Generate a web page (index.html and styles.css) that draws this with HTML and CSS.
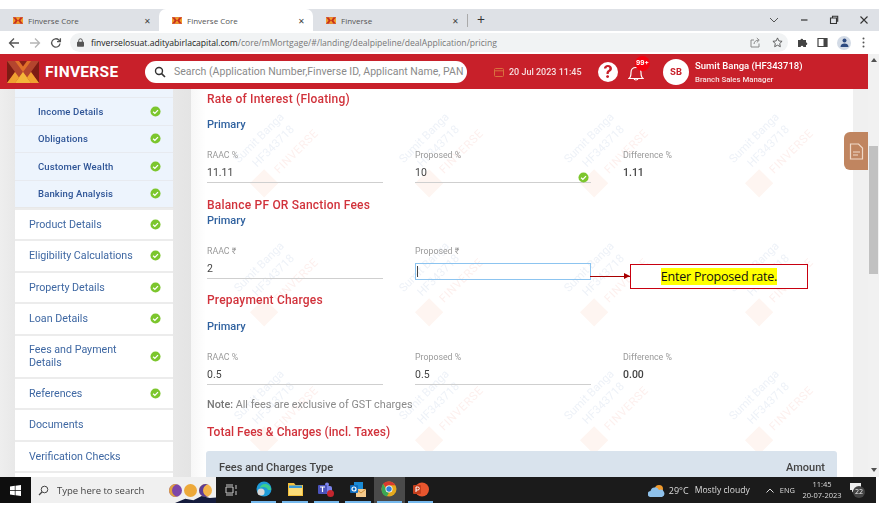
FILE: index.html
```html
<!DOCTYPE html>
<html lang="en">
<head>
<meta charset="utf-8">
<title>Finverse Core</title>
<link rel="stylesheet" href="styles.css">
</head>
<body>
<svg class="defs" width="0" height="0" aria-hidden="true">
  <symbol id="fav" viewBox="0 0 12 8"><rect width="12" height="8" fill="#c8321e"/><path d="M0 0l3 4-3 4zM12 0L9 4l3 4zM3 0l3 4 3-4zM3 8l3-4 3 4z" fill="#f2a02c"/></symbol>
  <symbol id="ok" viewBox="0 0 12 12"><circle cx="6" cy="6" r="5.5" fill="#7cc62d"/><path d="M3.4 6.2l1.9 1.9 3.4-3.6" fill="none" stroke="#fff" stroke-width="1.4"/></symbol>
</svg>
<div class="screen">
  <div class="tabstrip">
    <div class="tab"><svg class="fav"><use href="#fav"/></svg><span class="tab-title">Finverse Core</span><span class="tab-x">✕</span></div>
    <div class="tab tab-active"><svg class="fav"><use href="#fav"/></svg><span class="tab-title">Finverse Core</span><span class="tab-x">✕</span></div>
    <div class="tab tab-last"><svg class="fav"><use href="#fav"/></svg><span class="tab-title">Finverse</span><span class="tab-x">✕</span></div>
    <span class="tab-plus">+</span>
    <div class="winctl">
      <svg width="10" height="6" viewBox="0 0 10 6"><path d="M1 1l4 4 4-4" fill="none" stroke="#555" stroke-width="1"/></svg>
      <svg width="10" height="10" viewBox="0 0 10 10"><path d="M2 5h6.5" stroke="#333" stroke-width="1.2"/></svg>
      <svg width="10" height="10" viewBox="0 0 10 10"><path d="M1.5 3h6v5.5h-6zM3.5 3V1.3h5.2v5H7.5" fill="none" stroke="#333" stroke-width="1.1"/></svg>
      <svg width="10" height="10" viewBox="0 0 10 10"><path d="M1.5 1.5l7 7M8.5 1.5l-7 7" stroke="#333" stroke-width="1.1"/></svg>
    </div>
  </div>
  <div class="toolbar">
    <svg class="nav" width="12" height="12" viewBox="0 0 12 12"><path d="M11 6H2M6 1.5L1.5 6 6 10.5" fill="none" stroke="#555" stroke-width="1.3"/></svg>
    <svg class="nav" width="12" height="12" viewBox="0 0 12 12"><path d="M1 6h9M6 1.5L10.5 6 6 10.5" fill="none" stroke="#b5b5b5" stroke-width="1.3"/></svg>
    <svg class="nav" width="12" height="12" viewBox="0 0 12 12"><path d="M10 6.5A4.2 4.2 0 1 1 8.8 3L10.3 4.5M10.4 1.2v3.4H7" fill="none" stroke="#555" stroke-width="1.3"/></svg>
    <div class="omnibox">
      <svg class="lock" width="7" height="9" viewBox="0 0 7 9"><path d="M1.7 4V2.6a1.8 1.8 0 0 1 3.6 0V4" fill="none" stroke="#555"/><rect y="3.8" width="7" height="5" rx=".8" fill="#555"/></svg>
      <span class="url"><b>finverselosuat.adityabirlacapital.com</b>/core/mMortgage/#/landing/dealpipeline/dealApplication/pricing</span>
      <svg class="omni-share" width="11" height="11" viewBox="0 0 11 11"><path d="M9 6.5V10H1V3h3M4 7c.3-2.600 2-3.800 4.500-3.800M6.800 1l2.400 2.200-2.400 2.300" fill="none" stroke="#888"/></svg>
      <svg width="11" height="11" viewBox="0 0 12 12"><path d="M6 1l1.500 3.300 3.500.4-2.600 2.400.7 3.500L6 8.900l-3.100 1.700.7-3.500L1 4.700l3.500-.4z" fill="none" stroke="#555"/></svg>
    </div>
    <div class="tool-icons">
      <svg width="11" height="11" viewBox="0 0 11 11"><path d="M1 3h2.500a1.300 1.300 0 0 1 2.600 0H9v2.500a1.300 1.300 0 0 1 0 2.600V10H6.300a1.300 1.300 0 0 0-2.600 0H1z" fill="#444"/></svg>
      <svg width="11" height="11" viewBox="0 0 11 11"><path d="M1 1.500h9v8H1z" fill="none" stroke="#444" stroke-width="1.200"/><path d="M6.500 1.500H10v8H6.500z" fill="#444"/></svg>
      <span class="profile"><svg width="9" height="9" viewBox="0 0 9 9"><circle cx="4.500" cy="2.500" r="2" fill="#2d4a80"/><path d="M.5 9c0-2.500 1.800-3.500 4-3.500s4 1 4 3.500z" fill="#2d4a80"/></svg></span>
      <svg width="3" height="11" viewBox="0 0 3 11"><circle cx="1.500" cy="1.500" r="1" fill="#555"/><circle cx="1.500" cy="5.500" r="1" fill="#555"/><circle cx="1.500" cy="9.500" r="1" fill="#555"/></svg>
    </div>
  </div>
  <div class="viewport">
    <div class="page">
      <header class="appbar">
        <svg class="logo" viewBox="0 0 32 22"><rect width="32" height="22" fill="#b4452e"/><path d="M0 0l8 11L0 22zM32 0l-8 11 8 11z" fill="#7d1c14"/><path d="M8 0l8 11 8-11zM16 11l-8 11h16z" fill="#e0702a"/><path d="M8 22l8-11 8 11z" fill="#f4b63a"/><path d="M0 22l8-11 4 5.500L8 22zM32 22l-8-11-4 5.500 4 5.500z" fill="#f0a030"/><path d="M12 0l4 5.500L20 0z" fill="#8a2016"/></svg>
        <span class="brand">FINVERSE</span>
        <div class="search">
          <svg class="search-icon" width="12" height="12" viewBox="0 0 12 12"><circle cx="5" cy="5" r="3.500" fill="none" stroke="#333" stroke-width="1.400"/><path d="M7.600 7.600L11 11" stroke="#333" stroke-width="1.600"/></svg>
          <span class="search-text">Search (Application Number,Finverse ID, Applicant Name, PAN</span>
        </div>
        <svg class="cal" width="10" height="10" viewBox="0 0 10 10"><rect x=".5" y="1.500" width="9" height="8" rx="1" fill="none" stroke="#d9713f"/><path d="M.5 3.800h9" stroke="#d9713f"/></svg>
        <span class="date">20 Jul 2023 11:45</span>
        <span class="help">?</span>
        <span class="bell">
          <svg width="16" height="16" viewBox="0 0 16 16"><path d="M1 13.500c2-1.500 2-3 2-6 0-3 2-5 5-5s5 2 5 5c0 3 0 4.500 2 6zM6 13.500c.3 2 3.700 2 4 0" fill="none" stroke="#fff" stroke-width="1.200"/></svg>
          <span class="badge">99+</span>
        </span>
        <span class="avatar">SB</span>
        <div class="user">
          <span class="user-name">Sumit Banga (HF343718)</span>
          <span class="user-role">Branch Sales Manager</span>
        </div>
      </header>
      <div class="workspace">
        <nav class="sidebar">
          <ul class="sub-list">
            <li class="sub-row"><span>Income Details</span><svg class="ok"><use href="#ok"/></svg></li>
            <li class="sub-row"><span>Obligations</span><svg class="ok"><use href="#ok"/></svg></li>
            <li class="sub-row"><span>Customer Wealth</span><svg class="ok"><use href="#ok"/></svg></li>
            <li class="sub-row"><span>Banking Analysis</span><svg class="ok"><use href="#ok"/></svg></li>
          </ul>
          <ul class="main-list">
            <li class="main-row"><span>Product Details</span><svg class="ok"><use href="#ok"/></svg></li>
            <li class="main-row"><span>Eligibility Calculations</span><svg class="ok"><use href="#ok"/></svg></li>
            <li class="main-row"><span>Property Details</span><svg class="ok"><use href="#ok"/></svg></li>
            <li class="main-row"><span>Loan Details</span><svg class="ok"><use href="#ok"/></svg></li>
            <li class="main-row main-row-tall"><span>Fees and Payment<br>Details</span><svg class="ok"><use href="#ok"/></svg></li>
            <li class="main-row"><span>References</span><svg class="ok"><use href="#ok"/></svg></li>
            <li class="main-row"><span>Documents</span></li>
            <li class="main-row"><span>Verification Checks</span></li>
            <li class="main-row"><span></span></li>
          </ul>
        </nav>
        <main class="content">
          <div class="watermarks" aria-hidden="true">
            <div class="wm"><i class="wm-blue">Sumit Banga</i><i class="wm-blue">HF343718</i><i class="wm-red"><em></em>FINVERSE</i></div>
            <div class="wm"><i class="wm-blue">Sumit Banga</i><i class="wm-blue">HF343718</i><i class="wm-red"><em></em>FINVERSE</i></div>
            <div class="wm"><i class="wm-blue">Sumit Banga</i><i class="wm-blue">HF343718</i><i class="wm-red"><em></em>FINVERSE</i></div>
            <div class="wm"><i class="wm-blue">Sumit Banga</i><i class="wm-blue">HF343718</i><i class="wm-red"><em></em>FINVERSE</i></div>
            <div class="wm"><i class="wm-blue">Sumit Banga</i><i class="wm-blue">HF343718</i><i class="wm-red"><em></em>FINVERSE</i></div>
            <div class="wm"><i class="wm-blue">Sumit Banga</i><i class="wm-blue">HF343718</i><i class="wm-red"><em></em>FINVERSE</i></div>
            <div class="wm"><i class="wm-blue">Sumit Banga</i><i class="wm-blue">HF343718</i><i class="wm-red"><em></em>FINVERSE</i></div>
            <div class="wm"><i class="wm-blue">Sumit Banga</i><i class="wm-blue">HF343718</i><i class="wm-red"><em></em>FINVERSE</i></div>
            <div class="wm"><i class="wm-blue">Sumit Banga</i><i class="wm-blue">HF343718</i><i class="wm-red"><em></em>FINVERSE</i></div>
            <div class="wm"><i class="wm-blue">Sumit Banga</i><i class="wm-blue">HF343718</i><i class="wm-red"><em></em>FINVERSE</i></div>
            <div class="wm"><i class="wm-blue">Sumit Banga</i><i class="wm-blue">HF343718</i><i class="wm-red"><em></em>FINVERSE</i></div>
            <div class="wm"><i class="wm-blue">Sumit Banga</i><i class="wm-blue">HF343718</i><i class="wm-red"><em></em>FINVERSE</i></div>
          </div>
          <div class="form">
            <h2 class="h-roi">Rate of Interest (Floating)</h2>
            <h3 class="primary p-roi">Primary</h3>
            <div class="fields">
              <div class="field"><label>RAAC %</label><div class="value">11.11</div></div>
              <div class="field"><label>Proposed %</label><div class="value">10<svg class="ok ok-field"><use href="#ok"/></svg></div></div>
              <div class="field field-plain"><label>Difference %</label><div class="value">1.11</div></div>
            </div>
            <h2 class="h-pf">Balance PF OR Sanction Fees</h2>
            <h3 class="primary p-pf">Primary</h3>
            <div class="fields">
              <div class="field"><label>RAAC ₹</label><div class="value">2</div></div>
              <div class="field"><label>Proposed ₹</label><div class="value value-focus"><span class="caret"></span></div></div>
            </div>
            <h2 class="h-pre">Prepayment Charges</h2>
            <h3 class="primary p-pre">Primary</h3>
            <div class="fields">
              <div class="field"><label>RAAC %</label><div class="value">0.5</div></div>
              <div class="field"><label>Proposed %</label><div class="value">0.5</div></div>
              <div class="field field-plain"><label>Difference %</label><div class="value">0.00</div></div>
            </div>
            <p class="note"><b>Note:</b> All fees are exclusive of GST charges</p>
            <h2 class="h-total">Total Fees &amp; Charges (incl. Taxes)</h2>
            <div class="table-head"><span>Fees and Charges Type</span><span>Amount</span></div>
          </div>
          <div class="callout-arrow"></div>
          <div class="callout"><mark>Enter Proposed rate.</mark></div>
        </main>
        <div class="rail">
          <span class="doc-tab"><svg width="15" height="17" viewBox="0 0 15 17"><path d="M1.500 1h8l4 4v11h-12z" fill="none" stroke="#f0d9c8" stroke-width="1.200"/><path d="M4 9h7M4 12h5" stroke="#f0d9c8"/></svg></span>
        </div>
      </div>
    </div>
    <div class="scrollbar">
      <span class="arrow-up"></span>
      <span class="thumb"></span>
      <span class="arrow-down"></span>
    </div>
  </div>
  <footer class="taskbar">
    <span class="start"><svg width="11" height="11" viewBox="0 0 11 11"><path d="M0 1.500l4.800-.7v4.400H0zM5.500.7L11 0v5.200H5.500zM0 5.900h4.800v4.300L0 9.500zM5.500 5.900H11V11l-5.500-.8z" fill="#fff"/></svg></span>
    <div class="tb-search">
      <svg class="tb-glass" width="11" height="11" viewBox="0 0 11 11"><circle cx="6.500" cy="4.500" r="3.300" fill="none" stroke="#444"/><path d="M4 7L1 10" stroke="#444" stroke-width="1.200"/></svg>
      <span>Type here to search</span>
      <div class="moons"><i class="moon-a"></i><i class="moon-b"></i><i class="moon-c"></i></div>
    </div>
    <svg class="taskview" width="13" height="12" viewBox="0 0 13 12"><path d="M1 3h7v6H1zM11 1v4M11 7v4M1 1h7M1 11h7" fill="none" stroke="#ccc"/></svg>
    <div class="apps">
      <span class="app"><svg width="16" height="16" viewBox="0 0 16 16"><circle cx="8" cy="8" r="7.500" fill="#1e9bd7"/><path d="M15 9c0-4-3-6-6-6-3 0-5 2-5 4 3-2 7-1 8 2z" fill="#3ccf8e"/><circle cx="5" cy="11" r="3.600" fill="#d8d8d8"/></svg></span>
      <span class="app"><svg width="15" height="13" viewBox="0 0 15 13"><path d="M0 0h6l1.500 2H15v11H0z" fill="#f5c13d"/><rect x="1" y="4" width="13" height="8" fill="#fbdc78"/><rect x="1" y="2.500" width="13" height="2.500" fill="#3b9bd9"/></svg></span>
      <span class="app"><svg width="16" height="15" viewBox="0 0 16 15"><circle cx="9" cy="2.500" r="2" fill="#7b83eb"/><rect x="5" y="4" width="9" height="8" rx="2" fill="#7b83eb"/><rect y="3" width="9" height="9" rx="1" fill="#4b53bc"/><path d="M2 5h5M4.500 5v5" stroke="#fff" stroke-width="1.200"/><circle cx="12.500" cy="11.500" r="3.500" fill="#c4262e"/></svg></span>
      <span class="app"><svg width="16" height="15" viewBox="0 0 16 15"><rect x="4" width="9" height="8" fill="#1a8ad4"/><rect x="6" y="7" width="10" height="8" fill="#f5c98a"/><path d="M6 7l5 4 5-4" fill="none" stroke="#c88a3a"/><rect y="3" width="8" height="8" rx="1" fill="#0f6cbd"/><circle cx="4" cy="7" r="2" fill="none" stroke="#fff" stroke-width="1.200"/></svg></span>
      <span class="app app-active"><svg width="16" height="16" viewBox="0 0 16 16"><circle cx="8" cy="8" r="7.500" fill="#e5a91e"/><path d="M8 .5a7.500 7.500 0 0 1 6.500 3.800H8a3.700 3.700 0 0 0-3.300 2L2 2.800A7.500 7.500 0 0 1 8 .5z" fill="#d93a2f"/><path d="M.7 8A7.500 7.500 0 0 1 2 2.800l3 5.200a3 3 0 0 0 3 3.700l-2.300 3.900A7.500 7.500 0 0 1 .7 8z" fill="#3aa655"/><circle cx="8" cy="8" r="3.500" fill="#fff"/><circle cx="8" cy="8" r="2.700" fill="#2f7fd9"/></svg></span>
      <span class="app"><svg width="16" height="15" viewBox="0 0 16 15"><circle cx="9" cy="7.500" r="7" fill="#e8562e"/><rect y="3" width="8" height="9" rx="1" fill="#c43e1c"/><path d="M3 10V5h1.800a1.400 1.400 0 0 1 0 3H3" fill="none" stroke="#fff"/></svg></span>
    </div>
    <div class="tray">
      <svg class="weather" width="17" height="13" viewBox="0 0 17 13"><circle cx="11" cy="5" r="4" fill="#f09a2c"/><path d="M3 13a3 3 0 0 1-.5-6 4.500 4.500 0 0 1 8.500-1 3.500 3.500 0 0 1 3 7z" fill="#8fc1ea"/></svg>
      <span class="temp">29°C</span>
      <span class="cond">Mostly cloudy</span>
      <svg class="chev" width="8" height="5" viewBox="0 0 8 5"><path d="M.5 4.500L4 1l3.500 3.500" fill="none" stroke="#ddd"/></svg>
      <span class="lang">ENG</span>
      <div class="clock"><span>11:45</span><span>20-07-2023</span></div>
      <span class="notif"><svg width="11" height="10" viewBox="0 0 11 10"><path d="M0 0h11v7H4L2 9.500V7H0z" fill="#eee"/></svg><b>22</b></span>
    </div>
  </footer>
</div>
</body>
</html>
```
FILE: styles.css
```css
* { box-sizing: border-box; margin: 0; padding: 0; }
html, body { width: 879px; height: 525px; overflow: hidden; background: #fff; }
body { font-family: "Inter", "Liberation Sans", sans-serif; }
.defs { position: absolute; }
ul { list-style: none; }
i, em { font-style: normal; }

.screen { width: 879px; height: 525px; padding: 9px 0 22px; display: flex; flex-direction: column; filter: blur(.35px); }

/* browser chrome */
.tabstrip { height: 22px; flex: none; background: #dee1e6; display: flex; align-items: center; font-family: "Open Sans", sans-serif; }
.tab { width: 154px; height: 22px; padding: 0 6px 0 13px; display: flex; align-items: center; font-size: 8px; color: #555; flex: none; }
.tab:first-child { width: 159px; }
.tab-active { background: #fff; border-radius: 7px 7px 0 0; }
.fav { width: 10px; height: 7px; margin-right: 5px; flex: none; }
.tab-title { flex: 1; }
.tab-x { font-size: 8px; color: #444; margin-right: 2px; }
.tab-plus { padding-left: 9px; border-left: 1px solid #aaa; height: 13px; line-height: 12px; font-size: 14px; color: #333; }
.winctl { margin-left: auto; display: flex; align-items: center; gap: 20px; padding-right: 10px; }
.toolbar { height: 23px; flex: none; background: #fff; display: flex; align-items: center; padding-left: 8px; }
.nav { margin-right: 9px; flex: none; }
.omnibox { width: 718px; height: 19px; margin-left: -1px; margin-right: 9px; padding: 0 5px 0 7px; border-radius: 10px; background: #f1f3f4; display: flex; align-items: center; gap: 11px; }
.lock { flex: none; }
.omnibox .url { margin-left: -4px; font-family: "Open Sans", sans-serif; font-size: 8.6px; color: #777; white-space: nowrap; flex: 1; }
.url b { font-weight: 400; color: #222; }
.tool-icons { display: flex; align-items: center; gap: 9px; }
.profile { width: 14px; height: 14px; border-radius: 50%; background: #d3dbe6; display: flex; align-items: center; justify-content: center; margin-right: 2px; }

/* viewport */
.viewport { flex: 1; min-height: 0; display: flex; }
.page { width: 868px; flex: none; display: flex; flex-direction: column; min-height: 0; }
.scrollbar { flex: 1; background: #f1f1f1; display: flex; flex-direction: column; align-items: center; }
.arrow-up { margin-top: 4px; border: 3px solid transparent; border-bottom: 4px solid #505050; border-top: 0; }
.thumb { margin-top: 84px; width: 9px; height: 128px; background: #c1c1c1; }
.arrow-down { margin-top: auto; margin-bottom: 5px; border: 3px solid transparent; border-top: 4px solid #505050; border-bottom: 0; }

/* app header */
.appbar { height: 35px; flex: none; background: #c8202a; display: flex; align-items: center; color: #fff; padding-left: 7px; }
.logo { width: 32px; height: 22px; flex: none; }
.brand { margin-left: 6px; width: 100px; font-size: 15.5px; font-weight: 700; flex: none; font-family: "Roboto", sans-serif; letter-spacing: .3px; }
.search { width: 322px; height: 22px; background: #fff; border-radius: 11px; display: flex; align-items: center; padding-left: 9px; overflow: hidden; flex: none; }
.search-icon { flex: none; }
.search-text { margin-left: 8px; font-family: "Roboto", sans-serif; font-size: 10.5px; color: #8a8a8a; white-space: nowrap; letter-spacing: .02px; }
.cal { margin-left: 27px; flex: none; }
.date { margin-left: 5px; width: 73px; font-size: 9px; font-weight: 500; color: #f6dfdf; white-space: nowrap; flex: none; font-family: "Roboto", sans-serif; }
.help { margin-left: 16px; width: 20px; height: 20px; border-radius: 50%; background: #fff; color: #c8202a; font-size: 17px; font-weight: 700; line-height: 20px; text-align: center; flex: none; }
.bell { margin-left: 10px; position: relative; width: 16px; height: 16px; flex: none; top: 1px; }
.bell svg { display: block; }
.badge { position: absolute; left: 7px; top: -9px; width: 15px; height: 15px; border-radius: 50%; background: #f5000f; font-size: 6.5px; font-weight: 700; line-height: 15px; text-align: center; }
.avatar { margin-left: 19px; width: 26px; height: 26px; border-radius: 50%; background: #fff; color: #c8202a; font-size: 9px; font-weight: 700; line-height: 26px; text-align: center; flex: none; }
.user { margin-left: 6px; display: flex; flex-direction: column; gap: 4px; font-family: "Roboto", sans-serif; white-space: nowrap; }
.user-name { font-size: 9.5px; font-weight: 500; }
.user-role { font-size: 7.8px; font-weight: 500; color: #f6dfdf; }

/* workspace */
.workspace { flex: 1; min-height: 0; display: flex; overflow: hidden; }
.sidebar { width: 191px; flex: none; padding: 0 18px 0 15px; background: linear-gradient(90deg, #eee 0, #e8e8e8 8%, #e8e8e8 90%, #e4e4e4 100%); overflow: hidden; font-family: "Roboto", sans-serif; }
.sub-list { background: #edf4fd; padding-top: 8px; }
.sub-row { height: 27.5px; display: flex; align-items: center; justify-content: space-between; padding: 0 12px 0 23px; font-size: 9.5px; font-weight: 500; letter-spacing: .15px; color: #2f5597; border-top: 1px solid #e7eaf0; }
.main-list { background: #ededed; margin-top: .5px; }
.main-row { height: 31.5px; background: #fff; border-top: 2px solid #ececec; display: flex; align-items: center; justify-content: space-between; padding: 0 12px 0 14px; font-size: 10.7px; line-height: 13px; color: #3f68a3; }
.main-row-tall { height: 43px; }
.ok { width: 11px; height: 11px; flex: none; }

.content { flex: 1; min-width: 0; position: relative; background: linear-gradient(90deg, #f7f7f7 0, #fff 15px); }
.watermarks { position: absolute; left: 6px; top: -9px; display: grid; grid-template-columns: repeat(4, 165px); grid-auto-rows: 128.5px; pointer-events: none; }
.wm { width: 165px; height: 128.5px; display: flex; flex-direction: column; align-items: flex-start; justify-content: center; padding-left: 40px; transform: rotate(-45deg); font-family: "Roboto", sans-serif; font-size: 11.5px; line-height: 16px; white-space: nowrap; }
.wm i { display: block; }
.wm-blue { color: #eef2f8; }
.wm-blue + .wm-blue { margin-left: 10px; }
.wm-red { color: #fdf0ee; margin-left: -6px; display: flex !important; align-items: center; gap: 7px; margin-top: 2px; letter-spacing: .6px; }
.wm-red em { width: 20px; height: 20px; background: #fef5f1; flex: none; }

.form { position: relative; padding: 0 16px; font-family: "Roboto", sans-serif; }
h2 { font-size: 12px; font-weight: 500; line-height: 14px; color: #d1323b; letter-spacing: .2px; }
.primary { font-size: 11px; font-weight: 500; line-height: 12px; color: #2f619f; }
.h-roi { margin-top: 3px; }
.p-roi { margin-top: 13px; }
.p-pf { margin-top: 3px; }
.p-pre { margin-top: 14px; }
.h-pf { margin-top: 15px; }
.h-pre { margin-top: 14px; }
.fields { display: grid; grid-template-columns: repeat(3, 176px); column-gap: 32px; margin-top: 19px; }
.field label { display: block; font-size: 8.8px; line-height: 10px; color: #9a9a9a; }
.value { position: relative; height: 18px; margin-top: 5px; padding: 2px 0 0; border-bottom: 1px solid #cfcfcf; font-size: 10.5px; line-height: 12px; color: #444; }
.field-plain .value { border-bottom: 0; font-weight: 500; }
.value-focus { border: 1.5px solid #8cc4f0; height: 17px; margin-top: 7px; margin-bottom: -2px; padding: 2px 0 0 1px; }
.caret { display: block; width: 1px; height: 11px; background: #444; }
.ok-field { position: absolute; right: 2px; top: 7px; }
.note { margin-top: 14px; font-size: 10.8px; line-height: 12px; color: #8a8a8a; }
.note b { font-weight: 500; color: #777; }
.h-total { margin-top: 14px; letter-spacing: .05px; }
.table-head { margin-top: 12px; width: 631px; margin-left: -1px; height: 27px; padding: 11px 12px 0 13px; background: #d9e3ed; border-radius: 3px 3px 0 0; display: flex; justify-content: space-between; font-size: 11px; font-weight: 500; line-height: 12px; color: #444; }

.callout { position: absolute; left: 439px; top: 175px; width: 178px; height: 25px; border: 1.5px solid #c8000f; background: #fff; display: flex; align-items: center; justify-content: center; font-family: "Open Sans", sans-serif; font-size: 12.5px; letter-spacing: -.2px; }
.callout mark { background: #ffff00; color: #111; line-height: 17px; }
.callout-arrow { position: absolute; left: 399px; top: 186.5px; width: 40px; height: 1px; background: #a80000; }
.callout-arrow::after { content: ""; position: absolute; right: 0; top: -2.5px; border-left: 6px solid #a80000; border-top: 3px solid transparent; border-bottom: 3px solid transparent; }

.rail { width: 15px; flex: none; background: #f0f0f0; position: relative; }
.doc-tab { position: absolute; right: 0; top: 43px; width: 24px; height: 38px; border-radius: 6px 0 0 6px; background: #c08560; display: flex; align-items: center; justify-content: center; }

/* taskbar */
.taskbar { height: 26px; flex: none; background: #1b1b1b; display: flex; align-items: center; color: #ddd; font-family: "Open Sans", sans-serif; border-right: 3px solid #fff; }
.start { width: 31px; height: 26px; flex: none; background: #0e0e0e; display: flex; align-items: center; justify-content: center; }
.tb-search { width: 185px; height: 26px; flex: none; background: #f0f0f0; display: flex; align-items: center; padding-left: 7px; font-size: 9.5px; color: #444; position: relative; overflow: hidden; }
.tb-glass { flex: none; }
.tb-search span { margin-left: 8px; }
.tb-search::after { content: ""; position: absolute; right: 0; bottom: 0; width: 41px; height: 7px; background: #141b3c; clip-path: polygon(0 100%, 25% 40%, 45% 60%, 65% 0, 85% 30%, 100% 20%, 100% 100%); }
.moons { position: absolute; left: 138px; top: 7px; display: flex; gap: 2px; }
.moons i { width: 13px; height: 13px; border-radius: 50%; }
.moon-a { background: #7d46a8; box-shadow: inset 3px 0 0 #e0a040; }
.moon-b { background: #eda93a; }
.moon-c { background: #f3b34a; box-shadow: inset 4px 0 0 #5c3d96; }
.taskview { margin-left: 9px; flex: none; }
.apps { display: flex; margin-left: 10px; height: 26px; }
.app { width: 31.4px; height: 26px; display: flex; align-items: center; justify-content: center; position: relative; padding-bottom: 2px; }
.app::after { content: ""; position: absolute; left: 3px; right: 3px; bottom: 0; height: 2px; background: #76b9ed; }
.app-active { background: #4a4a4a; }
.tray { margin-left: auto; display: flex; align-items: center; font-size: 9px; height: 26px; padding-right: 12px; }
.temp { margin-left: 4px; }
.cond { margin-left: 6px; font-size: 8.6px; }
.chev { margin-left: 16px; }
.lang { margin-left: 6px; font-size: 7.5px; }
.clock { margin-left: 8px; width: 38px; display: flex; flex-direction: column; align-items: center; font-size: 7.5px; line-height: 11px; white-space: nowrap; }
.notif { margin-left: 9px; position: relative; width: 14px; height: 14px; display: block; }
.notif b { position: absolute; left: 3px; top: 3px; width: 12px; height: 12px; border-radius: 50%; background: #444; color: #eee; font-size: 7px; font-weight: 400; line-height: 12px; text-align: center; }
```
